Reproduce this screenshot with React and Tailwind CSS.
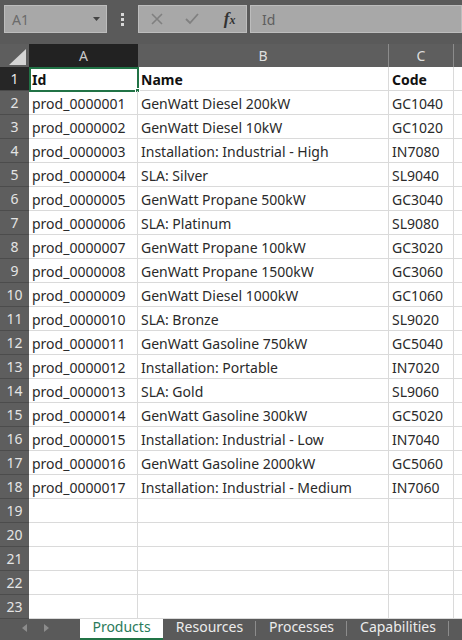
import React from "react";

const rows = [
  ["prod_0000001", "GenWatt Diesel 200kW", "GC1040"],
  ["prod_0000002", "GenWatt Diesel 10kW", "GC1020"],
  ["prod_0000003", "Installation: Industrial - High", "IN7080"],
  ["prod_0000004", "SLA: Silver", "SL9040"],
  ["prod_0000005", "GenWatt Propane 500kW", "GC3040"],
  ["prod_0000006", "SLA: Platinum", "SL9080"],
  ["prod_0000007", "GenWatt Propane 100kW", "GC3020"],
  ["prod_0000008", "GenWatt Propane 1500kW", "GC3060"],
  ["prod_0000009", "GenWatt Diesel 1000kW", "GC1060"],
  ["prod_0000010", "SLA: Bronze", "SL9020"],
  ["prod_0000011", "GenWatt Gasoline 750kW", "GC5040"],
  ["prod_0000012", "Installation: Portable", "IN7020"],
  ["prod_0000013", "SLA: Gold", "SL9060"],
  ["prod_0000014", "GenWatt Gasoline 300kW", "GC5020"],
  ["prod_0000015", "Installation: Industrial - Low", "IN7040"],
  ["prod_0000016", "GenWatt Gasoline 2000kW", "GC5060"],
  ["prod_0000017", "Installation: Industrial - Medium", "IN7060"],
  ["", "", ""],
  ["", "", ""],
  ["", "", ""],
  ["", "", ""],
  ["", "", ""],
];

const font = { fontFamily: '"Noto Sans", "Noto Sans CJK JP", sans-serif' };

function Cell({ w, children, bold }) {
  return (
    <div
      className={`relative h-full shrink-0 border-r border-b border-[#dadada] pl-[3px] pr-[3px] pt-[1px] flex items-center overflow-hidden whitespace-nowrap text-[14px] text-[#2a2a2a] ${bold ? "font-bold text-[#111]" : ""} ${w}`}
    >
      {children}
    </div>
  );
}

export default function App() {
  return (
    <div className="w-[462px] h-[640px] bg-[#5a5a5a] flex flex-col overflow-hidden" style={font}>
      {/* top bar */}
      <div className="h-[44px] shrink-0 flex items-start pt-[5px] bg-[#5a5a5a]">
        <div className="ml-[4px] w-[103px] h-[28px] bg-[#a8a8a8] border border-[#bdbdbd] flex items-center justify-between pl-[7px] pr-[6px]">
          <span className="text-[14px] text-[#6b6b6b]">A1</span>
          <svg width="7" height="4" viewBox="0 0 7 4"><path d="M0 0h7L3.5 4z" fill="#444" /></svg>
        </div>
        <div className="w-[31px] h-[28px] flex flex-col items-center justify-center gap-[2px]">
          <div className="w-[3px] h-[3px] bg-[#d8d8d8]" />
          <div className="w-[3px] h-[3px] bg-[#d8d8d8]" />
          <div className="w-[3px] h-[3px] bg-[#d8d8d8]" />
        </div>
        <div className="w-[109px] h-[28px] bg-[#a8a8a8] border border-[#bdbdbd] flex items-center">
          <div className="w-[36px] flex justify-center">
            <svg width="14" height="14" viewBox="0 0 14 14"><path d="M2 2l10 10M12 2L2 12" stroke="#808080" strokeWidth="1.6" /></svg>
          </div>
          <div className="w-[36px] flex justify-center">
            <svg width="16" height="14" viewBox="0 0 16 14"><path d="M2 7l4 4 8-9" stroke="#808080" strokeWidth="1.8" fill="none" /></svg>
          </div>
          <div className="w-[36px] flex justify-center pl-[3px]">
            <span className="text-[17px] italic font-bold text-[#333]" style={{ fontFamily: '"Liberation Serif", serif' }}>
              f<span className="text-[12px]">x</span>
            </span>
          </div>
        </div>
        <div className="ml-[3px] flex-1 h-[28px] bg-[#a8a8a8] border border-[#bdbdbd] flex items-center pl-[11px]">
          <span className="text-[14px] text-[#5e5e5e]">Id</span>
        </div>
      </div>

      {/* column headers */}
      <div className="h-[23px] shrink-0 flex bg-[#5e5e5e]">
        <div className="w-[29px] h-full shrink-0 relative">
          <svg className="absolute left-[9px] top-[5px]" width="17" height="16" viewBox="0 0 17 16"><path d="M17 0V16H0z" fill="#d4d4d4" /></svg>
        </div>
        <div className="w-[109px] h-full shrink-0 bg-[#222] flex items-center justify-center text-[14px] text-[#c8c8c8]">A</div>
        <div className="w-[251px] h-full shrink-0 border-r border-[#8c8c8c] flex items-center justify-center text-[14px] text-[#dedede]">B</div>
        <div className="w-[65px] h-full shrink-0 border-r border-[#8c8c8c] flex items-center justify-center text-[14px] text-[#dedede]">C</div>
        <div className="flex-1" />
      </div>

      {/* grid */}
      <div className="flex flex-col bg-white">
        <div className="h-[24px] flex relative">
          <div className="w-[29px] h-full shrink-0 bg-[#262626] border-b border-[#4a4a4a] flex items-center justify-center text-[14px] text-[#e8e8e8]">1</div>
          <Cell w="w-[109px]" bold>Id</Cell>
          <Cell w="w-[251px]" bold>Name</Cell>
          <Cell w="w-[65px]" bold>Code</Cell>
          <div className="flex-1 h-full border-b border-[#dadada]" />
          <div className="absolute left-[29px] top-0 w-[110px] h-[25px] border-2 border-[#217346] pointer-events-none" />
          <div className="absolute left-[135px] top-[21px] w-[5px] h-[5px] bg-[#217346] border border-white" />
        </div>
        {rows.map((r, i) => (
          <div key={i} className="h-[24px] flex">
            <div className="w-[29px] h-full shrink-0 bg-[#5e5e5e] border-b border-[#4c4c4c] flex items-center justify-center text-[14px] text-[#e4e4e4]">{i + 2}</div>
            <Cell w="w-[109px]">{r[0]}</Cell>
            <Cell w="w-[251px]">{r[1]}</Cell>
            <Cell w="w-[65px]">{r[2]}</Cell>
            <div className="flex-1 h-full border-b border-[#dadada]" />
          </div>
        ))}
      </div>

      {/* tab bar */}
      <div className="flex-1 flex items-stretch bg-[#5a5a5a] text-[14px] leading-[16px]">
        <div className="w-[80px] flex items-start pt-[5px]">
          <svg className="ml-[22px]" width="5" height="8" viewBox="0 0 5 8"><path d="M5 0v8L0 4z" fill="#8c8c8c" /></svg>
          <svg className="ml-[17px]" width="5" height="8" viewBox="0 0 5 8"><path d="M0 0v8l5-4z" fill="#8c8c8c" /></svg>
        </div>
        <div className="w-[83px] bg-white border-b-2 border-[#217346] flex items-start justify-center text-[#2a7a5a]">Products</div>
        <div className="w-[93px] flex items-start justify-center text-[#ececec] relative">
          Resources
          <div className="absolute right-0 top-[2px] bottom-[4px] w-px bg-[#8c8c8c]" />
        </div>
        <div className="w-[91px] flex items-start justify-center text-[#ececec] relative">
          Processes
          <div className="absolute right-0 top-[2px] bottom-[4px] w-px bg-[#8c8c8c]" />
        </div>
        <div className="w-[102px] flex items-start justify-center text-[#ececec] relative">
          Capabilities
          <div className="absolute right-0 top-[2px] bottom-[4px] w-px bg-[#8c8c8c]" />
        </div>
      </div>
    </div>
  );
}
